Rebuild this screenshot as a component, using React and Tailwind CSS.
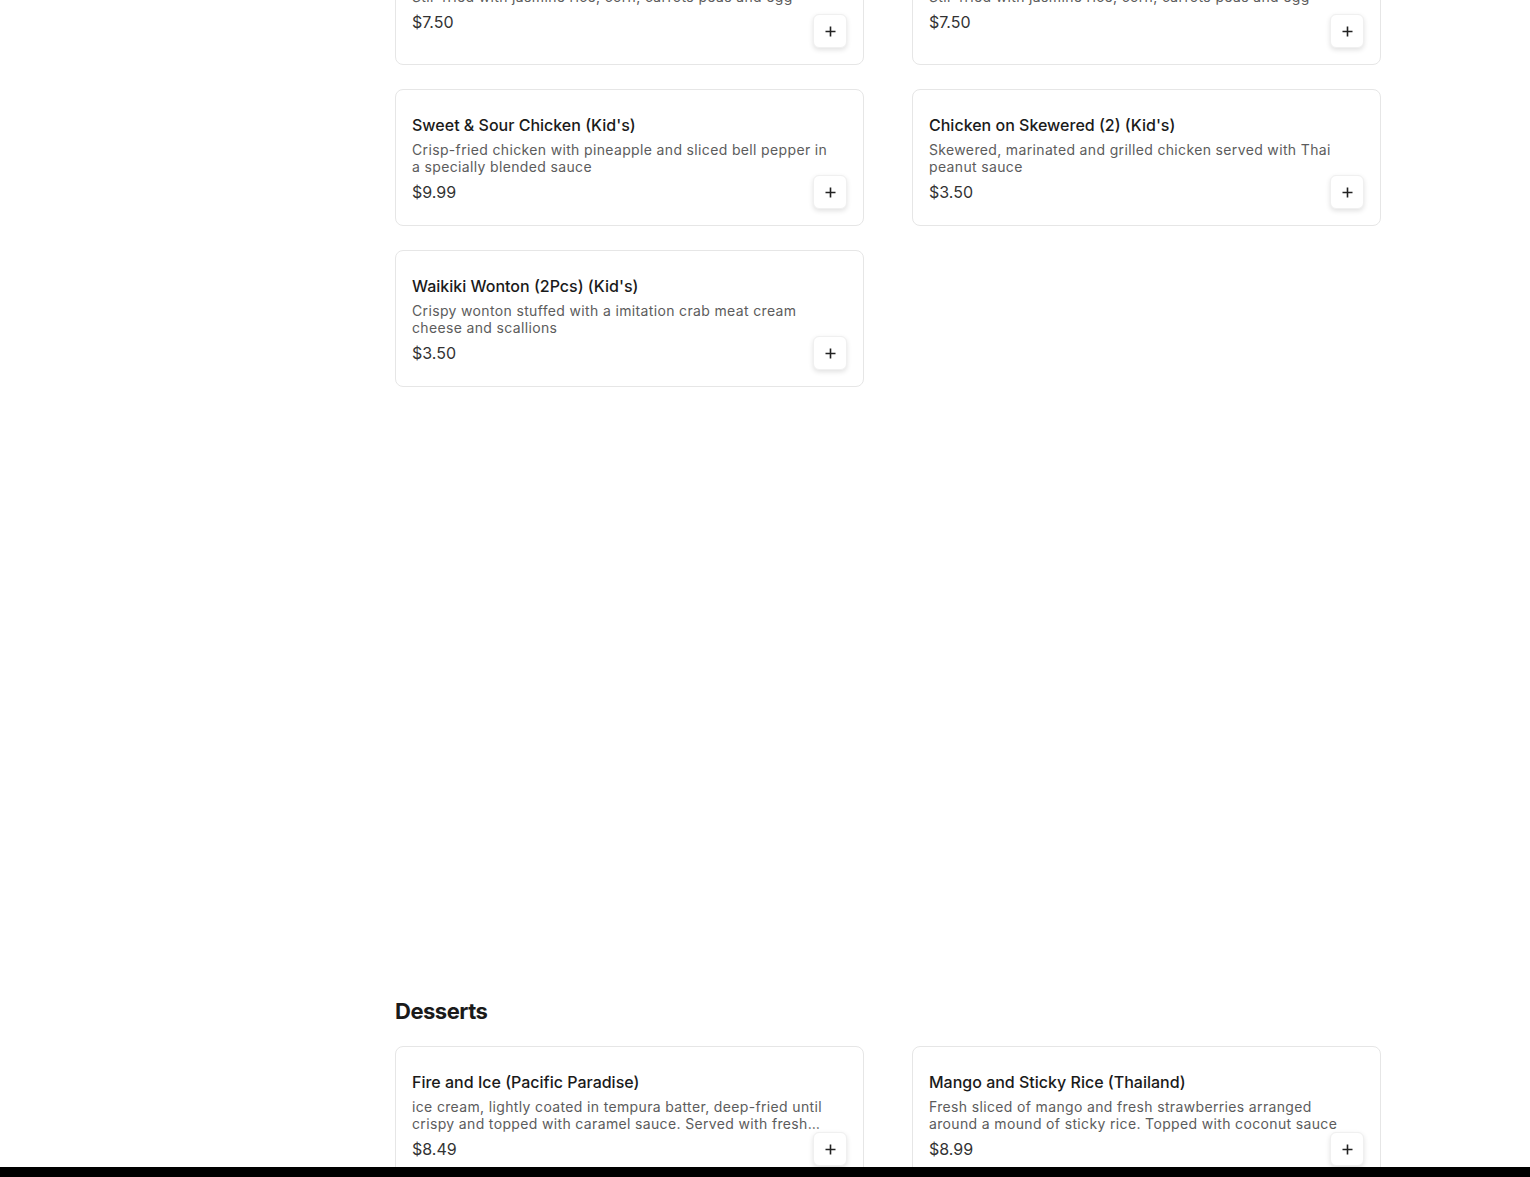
const kids = [
  {
    name: 'Fried Rice (Kid\'s)',
    desc: 'Stir-fried with jasmine rice, corn, carrots peas and egg',
    price: '$7.50',
  },
  {
    name: 'Fried Rice with Chicken (Kid\'s)',
    desc: 'Stir-fried with jasmine rice, corn, carrots peas and egg',
    price: '$7.50',
  },
  {
    name: "Sweet & Sour Chicken (Kid's)",
    desc: 'Crisp-fried chicken with pineapple and sliced bell pepper in a specially blended sauce',
    price: '$9.99',
  },
  {
    name: "Chicken on Skewered (2) (Kid's)",
    desc: 'Skewered, marinated and grilled chicken served with Thai peanut sauce',
    price: '$3.50',
  },
  {
    name: "Waikiki Wonton (2Pcs) (Kid's)",
    desc: 'Crispy wonton stuffed with a imitation crab meat cream cheese and scallions',
    price: '$3.50',
  },
]

const desserts = [
  {
    name: 'Fire and Ice (Pacific Paradise)',
    desc: 'ice cream, lightly coated in tempura batter, deep-fried until crispy and topped with caramel sauce. Served with fresh whipped cream and strawberries',
    price: '$8.49',
  },
  {
    name: 'Mango and Sticky Rice (Thailand)',
    desc: 'Fresh sliced of mango and fresh strawberries arranged around a mound of sticky rice. Topped with coconut sauce',
    price: '$8.99',
  },
]

function PlusIcon() {
  return (
    <svg width="11" height="11" viewBox="0 0 11 11" fill="none">
      <path d="M5.5 0.5v10M0.5 5.5h10" stroke="#222" strokeWidth="1.6" />
    </svg>
  )
}

function ItemCard({ item }) {
  return (
    <div className="relative min-h-[129px] rounded-lg border border-[#e6e6e6] bg-white px-4 pt-[23px] pb-[21px]">
      <h3 className="text-[16px] leading-6 font-medium text-[#1a1a1a]">{item.name}</h3>
      <p className="mt-1 pr-2 text-[14px] leading-[17px] tracking-[0.35px] text-[#5c5c5c] line-clamp-2">{item.desc}</p>
      <p className="mt-[5px] text-[16px] leading-6 text-[#333]">{item.price}</p>
      <button className="absolute right-4 bottom-4 flex h-[34px] w-[34px] items-center justify-center rounded-md border border-[#f0f0f0] bg-white shadow-[0_2px_5px_rgba(0,0,0,0.12)]">
        <PlusIcon />
      </button>
    </div>
  )
}

export default function App() {
  return (
    <div className="min-h-screen bg-white font-['Inter',sans-serif] overflow-hidden h-[1177px]">
      <div className="flex">
        <div className="w-[395px] shrink-0" />
        <main className="w-[986px] -mt-[64px]">
          <section>
            <div className="grid grid-cols-2 gap-x-12 gap-y-6">
              {kids.map((item) => (
                <ItemCard key={item.name} item={item} />
              ))}
            </div>
          </section>
          <section className="mt-[608px]">
            <h2 className="text-[22px] leading-8 font-bold tracking-[-0.5px] text-[#1a1a1a] mb-[19px]">Desserts</h2>
            <div className="grid grid-cols-2 gap-x-12 gap-y-6">
              {desserts.map((item) => (
                <ItemCard key={item.name} item={item} />
              ))}
            </div>
          </section>
        </main>
      </div>
      <div className="fixed bottom-0 left-0 right-0 h-[10px] bg-black" />
    </div>
  )
}
